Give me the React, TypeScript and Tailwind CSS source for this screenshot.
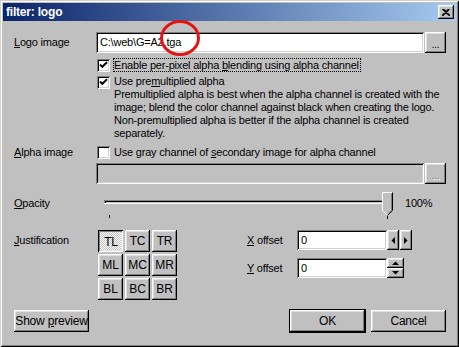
import React from "react";

const raised =
  "shadow-[inset_-1px_-1px_#000,inset_1px_1px_#fff,inset_-2px_-2px_#808080,inset_2px_2px_#dfdfdf]";
const sunken =
  "shadow-[inset_1px_1px_#808080,inset_-1px_-1px_#fff,inset_2px_2px_#000,inset_-2px_-2px_#d4d0c8]";

function Check({ checked }: { checked: boolean }) {
  return (
    <div className={`w-[13px] h-[13px] bg-white shrink-0 ${sunken} flex items-center justify-center`}>
      {checked && (
        <svg width="13" height="13" viewBox="0 0 13 13">
          <path d="M3 5.5 L5.3 7.8 L10 3.2" stroke="#000" strokeWidth="1.9" fill="none" />
        </svg>
      )}
    </div>
  );
}

function Btn({
  children,
  className = "",
  pressed = false,
}: {
  children?: React.ReactNode;
  className?: string;
  pressed?: boolean;
}) {
  return (
    <div
      className={`flex items-center justify-center bg-[#c0c0c0] ${
        pressed
          ? "shadow-[inset_1px_1px_#000,inset_-1px_-1px_#fff,inset_2px_2px_#808080,inset_-2px_-2px_#dfdfdf] bg-[repeating-conic-gradient(#ffffff_0_25%,#c0c0c0_0_50%)] bg-[length:2px_2px] pt-[1px] pl-[1px]"
          : raised
      } ${className}`}
    >
      {children}
    </div>
  );
}

export default function App() {
  return (
    <div className="relative w-[459px] h-[347px] bg-[#c0c0c0] text-[11px] tracking-[-0.2px] text-black [font-family:'Liberation_Sans',Arial,sans-serif] shadow-[inset_1px_1px_#d4d0c8,inset_-1px_-1px_#000,inset_2px_2px_#fff,inset_-2px_-2px_#808080] p-[3px] flex flex-col overflow-hidden">
      {/* Title bar */}
      <div className="h-[18px] flex items-center justify-between pl-[3px] pr-[2px] bg-[linear-gradient(to_right,#0a246a,#a6caf0)]">
        <span className="text-white font-bold text-[12px] tracking-[-0.2px]">filter: logo</span>
        <div className={`w-[16px] h-[14px] bg-[#c0c0c0] ${raised} flex items-center justify-center`}>
          <svg width="8" height="7" viewBox="0 0 8 7">
            <path d="M0.5 0 L7.5 7 M1.5 0 L8 6.5 M7.5 0 L0.5 7 M6.5 0 L0 6.5" stroke="#000" strokeWidth="1.1" />
          </svg>
        </div>
      </div>

      {/* Body */}
      <div className="flex flex-col pl-[11px] pr-[10px]">
        {/* Logo image */}
        <div className="mt-[11px] flex h-[21px] items-center">
          <div className="w-[82px]">
            <u>L</u>ogo image
          </div>
          <div className={`w-[328px] h-[21px] bg-white ${sunken} flex items-center pl-[4px]`}>
            {"C:\\web\\G=A2.tga"}
          </div>
          <Btn className="ml-[1px] w-[21px] h-[21px]">
            <span className="text-[10px] leading-none mt-[4px]">...</span>
          </Btn>
        </div>

        {/* checkbox 1 */}
        <div className="mt-[5px] flex h-[14px] items-center ml-[83px]">
          <Check checked />
          <div className="ml-[3px] border border-dotted border-black h-[14px] flex items-center pr-[1px] leading-[12px]">
            <span>
              Enable per-pixel alpha <u>b</u>lending using alpha channel
            </span>
          </div>
        </div>

        {/* checkbox 2 */}
        <div className="mt-[3px] flex items-start ml-[83px]">
          <div className="mt-[1px]">
            <Check checked />
          </div>
          <div className="ml-[4px] leading-[13px]">
            <div>
              Use pre<u>m</u>ultiplied alpha
            </div>
            <div>Premultiplied alpha is best when the alpha channel is created with the</div>
            <div>image; blend the color channel against black when creating the logo.</div>
            <div>Non-premultiplied alpha is better if the alpha channel is created</div>
            <div>separately.</div>
          </div>
        </div>

        {/* Alpha image */}
        <div className="mt-[5px] flex h-[14px] items-center">
          <div className="w-[82px]">
            <u>A</u>lpha image
          </div>
          <div className="ml-[1px]">
            <Check checked={false} />
          </div>
          <div className="ml-[4px]">
            Use gray channel of <u>s</u>econdary image for alpha channel
          </div>
        </div>

        {/* disabled path */}
        <div className="mt-[4px] flex h-[21px] ml-[82px]">
          <div className={`w-[328px] h-[21px] bg-[#c0c0c0] ${sunken}`} />
          <Btn className="ml-[1px] w-[21px] h-[21px]">
            <span className="text-[10px] leading-none mt-[4px] text-[#808080] [text-shadow:1px_1px_#fff]">...</span>
          </Btn>
        </div>

        {/* Opacity */}
        <div className="mt-[8px] flex items-start h-[28px]">
          <div className="w-[82px] h-[22px] flex items-center">
            <span>
              <u>O</u>pacity
            </span>
          </div>
          <svg width="302" height="28" viewBox="0 0 302 28" className="shrink-0">
            <rect x="8" y="8" width="288" height="1" fill="#808080" />
            <rect x="8" y="8" width="1" height="4" fill="#808080" />
            <rect x="9" y="9" width="286" height="1" fill="#000" />
            <rect x="9" y="9" width="1" height="2" fill="#000" />
            <rect x="8" y="11" width="288" height="1" fill="#fff" />
            <rect x="295" y="8" width="1" height="4" fill="#fff" />
            <polygon points="286.5,0.5 296.5,0.5 296.5,18.5 291.5,23.5 286.5,18.5" fill="#c0c0c0" />
            <polyline points="291.5,23.5 286.5,18.5 286.5,0.5 296.5,0.5" stroke="#fff" fill="none" />
            <polyline points="296.5,0.5 296.5,18.5 291.5,23.5" stroke="#000" fill="none" />
            <polyline points="295.5,1.5 295.5,18.2 291.5,22.2" stroke="#808080" fill="none" />
            <rect x="13" y="23" width="1" height="3" fill="#000" />
            <rect x="291" y="24" width="1" height="3" fill="#000" />
          </svg>
          <div className="ml-[7px] h-[22px] flex items-center">100%</div>
        </div>

        {/* Justification */}
        <div className="mt-[10px] flex items-start">
          <div className="w-[82px] h-[20px] flex items-center">
            <span>
              <u>J</u>ustification
            </span>
          </div>
          <div className="ml-[2px] grid grid-cols-[25px_25px_25px] auto-rows-[22px] gap-[2px] text-[12px]">
            {["TL", "TC", "TR", "ML", "MC", "MR", "BL", "BC", "BR"].map((t, i) => (
              <Btn key={t} pressed={i === 0}>
                {t}
              </Btn>
            ))}
          </div>
          <div className="ml-[70px] flex flex-col">
            <div className="flex h-[20px] items-center">
              <div className="w-[50px]">
                <u>X</u> offset
              </div>
              <div className={`w-[90px] h-[20px] bg-white ${sunken} flex items-center pl-[4px]`}>0</div>
              <Btn className="w-[12px] h-[20px]">
                <svg width="4" height="7" viewBox="0 0 4 7">
                  <polygon points="4,0 4,7 0.5,3.5" fill="#000" />
                </svg>
              </Btn>
              <Btn className="ml-[1px] w-[12px] h-[20px]">
                <svg width="4" height="7" viewBox="0 0 4 7">
                  <polygon points="0,0 0,7 3.5,3.5" fill="#000" />
                </svg>
              </Btn>
            </div>
            <div className="mt-[8px] flex h-[20px] items-center">
              <div className="w-[50px]">
                <u>Y</u> offset
              </div>
              <div className={`w-[90px] h-[20px] bg-white ${sunken} flex items-center pl-[4px]`}>0</div>
              <div className="flex flex-col">
                <Btn className="w-[17px] h-[10px]">
                  <svg width="7" height="4" viewBox="0 0 7 4">
                    <polygon points="0,4 7,4 3.5,0.5" fill="#000" />
                  </svg>
                </Btn>
                <Btn className="w-[17px] h-[10px]">
                  <svg width="7" height="4" viewBox="0 0 7 4">
                    <polygon points="0,0 7,0 3.5,3.5" fill="#000" />
                  </svg>
                </Btn>
              </div>
            </div>
          </div>
        </div>

        {/* Bottom buttons */}
        <div className="mt-[10px] flex h-[22px]">
          <Btn className="w-[75px] h-[22px] text-[12px]">
            <span>
              Show <u>p</u>review
            </span>
          </Btn>
          <div className="ml-auto w-[75px] h-[22px] shadow-[0_0_0_1px_#000] bg-[#c0c0c0]">
            <Btn className="w-full h-full text-[12px]">OK</Btn>
          </div>
          <Btn className="ml-[6px] w-[75px] h-[22px] text-[12px]">Cancel</Btn>
        </div>
      </div>

      {/* red annotation circle */}
      <svg className="absolute left-0 top-0 pointer-events-none" width="459" height="347">
        <ellipse cx="180" cy="38" rx="18.5" ry="16.5" fill="none" stroke="#e51414" strokeWidth="3" />
      </svg>
    </div>
  );
}
